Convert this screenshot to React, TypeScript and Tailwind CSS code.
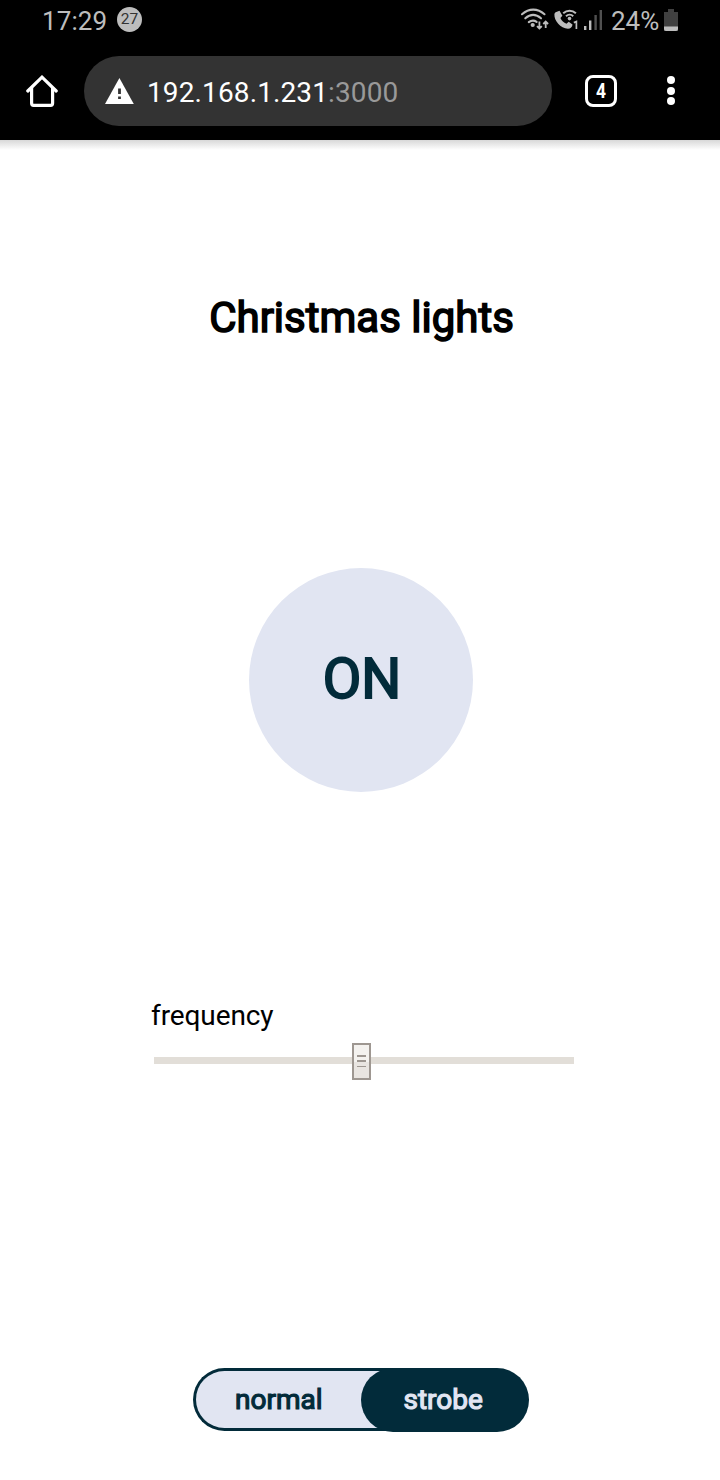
function StatusIcons() {
  return (
    <svg width="83" height="26" viewBox="520 6 83 26" fill="none" stroke="#bdbdbd">
      <g strokeWidth="2.1" strokeLinecap="round">
        <path d="M522 14.2C529 8.1 537.5 8.1 544.5 14.2" />
        <path d="M525.3 18.3C530.3 13.9 536 13.9 541 18.3" />
        <path d="M528.8 22.2C531.6 20 534 20 536.6 21.8" />
      </g>
      <circle cx="532.7" cy="25" r="2.1" fill="#bdbdbd" stroke="none" />
      <path d="M539.4 21.5V28.5M537 26.2L539.4 28.6L541.8 26.2M545.7 28V21.5M543.3 24L545.7 21.6L548.1 24" strokeWidth="1.8" />
      <path
        d="M555.6 12.2L559.5 10.8L562.4 15.8L560.4 18C561.7 21 563.7 22.6 566.5 23.8L568.7 21.8L572.5 24.5C572.3 27 570.5 28.7 568 28.7C560.5 28.5 554 20.5 554.4 14.5C554.5 13.5 554.8 12.8 555.6 12.2Z"
        fill="#bdbdbd"
        stroke="none"
      />
      <path d="M563.2 13.2C567 9.8 572.2 9.8 575.9 13.2M566 16.2C568.2 14.2 571.2 14.2 573.2 16.2" strokeWidth="2" />
      <circle cx="569.5" cy="18.6" r="1.8" fill="#bdbdbd" stroke="none" />
      <path d="M573.8 22.6L576.4 21.6V29" strokeWidth="1.7" />
      <path d="M585.2 26V30M590.2 20.5V30" strokeWidth="2.4" />
      <path d="M595.6 15V30M600.8 10V30" stroke="#505050" strokeWidth="2.4" />
    </svg>
  );
}

function StatusBar() {
  return (
    <div className="flex h-[42px] items-center pl-[42px] pr-[42px] text-[26px] leading-[42px] text-[#bdbdbd]">
      <span className="w-[75px] tracking-[0.1px]">17:29</span>
      <span className="-mt-[3px] flex size-[25px] items-center justify-center rounded-full bg-[#bdbdbd] pt-px text-[15.5px] leading-none text-[#333]">
        27
      </span>
      <div className="ml-auto flex items-center">
        <div className="mr-[8px] -mt-[4px]">
          <StatusIcons />
        </div>
        <span className="mr-[5px] w-[48px] whitespace-nowrap">24%</span>
        <svg width="14" height="22" viewBox="0 0 14 22" className="-mt-[2px]">
          <path d="M4 0H10V3H14V22H0V3H4Z" fill="#404040" />
          <path d="M0 17.5H14V20Q14 22 12 22H2Q0 22 0 20Z" fill="#bdbdbd" />
        </svg>
      </div>
    </div>
  );
}

function Toolbar() {
  return (
    <div className="flex h-[98px] items-start pl-[26px] pt-[14px]">
      <svg width="32" height="32" viewBox="0 0 32 32" className="mt-[19px]" fill="none" stroke="#fff" strokeWidth="3.2">
        <path d="M1.8 16L16 2.2L30.2 16" strokeLinecap="round" strokeLinejoin="miter" />
        <path d="M5.6 13V28.3Q5.6 30.3 7.6 30.3H24.6Q26.6 30.3 26.6 28.3V13" />
      </svg>
      <div className="ml-[26px] flex h-[70px] w-[468px] items-center rounded-full bg-[#333] pl-[21px]">
        <svg width="29" height="26" viewBox="0 0 29 26">
          <path d="M14.4 0L28.8 26H0Z" fill="#fff" />
          <path d="M13.1 10.5H15.9V16H13.1ZM13.1 18.5H15.9V21H13.1Z" fill="#333" />
        </svg>
        <span className="ml-[13px] mt-[4px] text-[28px] leading-[34px] tracking-[0.12px] text-white">
          192.168.1.231<span className="text-[#999]">:3000</span>
        </span>
      </div>
      <div className="ml-[33px] mt-[19px] flex size-[32px] items-center justify-center rounded-[8px] border-[3px] border-white text-[20.5px] font-bold leading-none text-white">
        <span className="scale-x-[0.85]">4</span>
      </div>
      <div className="ml-[50px] mt-[20px] flex flex-col gap-[2.5px]">
        <i className="size-[8px] rounded-full bg-white" />
        <i className="size-[8px] rounded-full bg-white" />
        <i className="size-[8px] rounded-full bg-white" />
      </div>
    </div>
  );
}

function FrequencySlider() {
  return (
    <div className="ml-[151px] mt-[204px] w-[423px]">
      <div className="text-[28px] leading-[40px] tracking-[-0.1px] text-black">frequency</div>
      <div className="ml-[3px] mt-[7px] flex h-[37px] items-center bg-[linear-gradient(#e2ded8,#e2ded8)] bg-[length:100%_7px] bg-[position:0_14px] bg-no-repeat">
        <div className="ml-[198px] flex h-[37px] w-[19px] flex-col items-center border-2 border-[#9e9791] bg-[linear-gradient(#f4f2ef_0_17px,#e9e5e1_17px)] pt-[10px]">
          <i className="h-[2px] w-[9px] bg-[#9e9791]" />
          <i className="mt-[3px] h-[2px] w-[9px] bg-[#9e9791]" />
          <i className="mt-[4px] h-px w-[9px] bg-[#9e9791]" />
        </div>
      </div>
    </div>
  );
}

function ModeSwitch() {
  return (
    <div className="ml-[193px] mt-[288px] flex h-[64px] w-[336px] items-start text-[28px] leading-[57px]">
      <div className="h-[63px] w-[232px] rounded-l-full border-[3px] border-r-0 border-[#022b3a] bg-[#e1e5f2] pl-[39px] text-[#022b3a] [-webkit-text-stroke:1.2px_#022b3a]">
        normal
      </div>
      <div className="z-10 -ml-[64px] h-[64px] w-[168px] rounded-full bg-[#022b3a] pt-[3px] pl-[42.5px] text-[#e1e5f2] [-webkit-text-stroke:1.2px_#e1e5f2]">
        strobe
      </div>
    </div>
  );
}

export default function App() {
  return (
    <div className="h-[1480px] w-[720px] overflow-hidden bg-white font-['Roboto',sans-serif]">
      <header className="h-[140px] bg-black">
        <StatusBar />
        <Toolbar />
      </header>
      <div className="h-[10px] bg-gradient-to-b from-[#d8d8d8] to-white" />
      <h1 className="mt-[143px] pl-[3px] text-center text-[42px] leading-[50px] text-black [-webkit-text-stroke:1.6px_black]">
        Christmas lights
      </h1>
      <button className="ml-[249px] mt-[225px] flex size-[224px] items-center justify-center rounded-full bg-[#e1e5f2] pb-[2px] pl-[2px] text-[56px] leading-none text-[#022b3a] [-webkit-text-stroke:2px_#022b3a]">
        ON
      </button>
      <FrequencySlider />
      <ModeSwitch />
    </div>
  );
}
